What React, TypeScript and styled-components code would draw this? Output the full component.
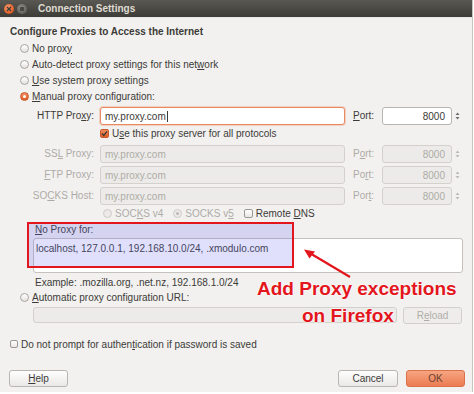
import { Fragment } from 'react';
import styled, { createGlobalStyle, css } from 'styled-components';

const Global = createGlobalStyle`
  body {
    margin: 0;
    background: #ffffff;
  }
`;

const Window = styled.div`
  position: relative;
  width: 472px;
  height: 392px;
  background: #f2f1f0;
  border-right: 1px solid #c8c5c0;
  font-family: 'Liberation Sans', Arial, sans-serif;
  font-size: 10px;
  color: #3c3b37;
  overflow: hidden;
`;

const TitleBar = styled.div`
  display: flex;
  align-items: center;
  height: 17px;
  padding-left: 4px;
  background: linear-gradient(#5a5852, #3d3c38);
  border-bottom: 1px solid #e9e7e3;
`;

const WinButton = styled.span<{ $kind: 'close' | 'min' }>`
  display: flex;
  align-items: center;
  justify-content: center;
  width: 10px;
  height: 10px;
  border-radius: 50%;
  margin-right: 3px;
  ${(p) =>
    p.$kind === 'close'
      ? css`
          background: radial-gradient(circle at 40% 35%, #f49a6e, #e25a22 70%);
        `
      : css`
          background: radial-gradient(circle at 40% 35%, #8c8a84, #67655f 70%);
        `}
`;

const Title = styled.span`
  margin-left: 8px;
  font-weight: bold;
  color: #dfdbd2;
`;

const Body = styled.div`
  padding: 6px 8px 0 10px;
`;

const Heading = styled.div`
  font-weight: bold;
  line-height: 16px;
`;

const RadioList = styled.div`
  display: flex;
  flex-direction: column;
  padding-left: 10px;
`;

const Option = styled.div<{ $h?: number; $disabled?: boolean }>`
  display: flex;
  align-items: center;
  gap: 3px;
  height: ${(p) => p.$h ?? 16}px;
  white-space: nowrap;
  color: ${(p) => (p.$disabled ? '#aeaba6' : '#3c3b37')};
`;

const Radio = styled.span<{ $checked?: boolean; $disabled?: boolean }>`
  position: relative;
  flex: none;
  width: 9px;
  height: 9px;
  box-sizing: border-box;
  border-radius: 50%;
  border: 1px solid ${(p) => (p.$checked && !p.$disabled ? '#c9592a' : p.$disabled ? '#cfccc7' : '#a9a6a1')};
  background: ${(p) =>
    p.$checked && !p.$disabled
      ? 'linear-gradient(#f28d5f, #e05d26)'
      : p.$disabled
      ? '#eceae8'
      : 'linear-gradient(#ffffff, #e4e2df)'};
  &::after {
    content: '';
    display: ${(p) => (p.$checked ? 'block' : 'none')};
    position: absolute;
    left: 2px;
    top: 2px;
    width: 3px;
    height: 3px;
    border-radius: 50%;
    background: ${(p) => (p.$disabled ? '#bcb9b4' : '#ffffff')};
  }
`;

const Box = styled.span<{ $checked?: boolean; $size?: number }>`
  display: flex;
  align-items: center;
  justify-content: center;
  flex: none;
  width: ${(p) => p.$size ?? 9}px;
  height: ${(p) => p.$size ?? 9}px;
  box-sizing: border-box;
  border-radius: 2px;
  border: 1px solid ${(p) => (p.$checked ? '#c9592a' : '#9c9994')};
  background: ${(p) => (p.$checked ? 'linear-gradient(#f28d5f, #e05d26)' : 'linear-gradient(#ffffff, #e9e7e4)')};
`;

const U = styled.span`
  text-decoration: underline;
  text-underline-offset: 1px;
`;

const ProxyGrid = styled.div`
  display: grid;
  grid-template-columns: 90px 245px 37px 70px 12px;
  grid-template-rows: 18px 17px 21px 21px 21px 17px;
  margin-top: 3px;
`;

const FieldLabel = styled.div<{ $disabled?: boolean; $left?: boolean }>`
  align-self: end;
  height: 18px;
  line-height: 18px;
  white-space: nowrap;
  text-align: ${(p) => (p.$left ? 'left' : 'right')};
  padding: ${(p) => (p.$left ? '0 0 0 8px' : '0 6px 0 0')};
  color: ${(p) => (p.$disabled ? '#aeaba6' : '#3c3b37')};
`;

const Field = styled.div<{ $focus?: boolean; $disabled?: boolean; $right?: boolean }>`
  align-self: end;
  display: flex;
  align-items: center;
  justify-content: ${(p) => (p.$right ? 'flex-end' : 'flex-start')};
  height: 18px;
  box-sizing: border-box;
  padding: 0 6px 0 4px;
  border-radius: 3px;
  white-space: nowrap;
  border: 1px solid ${(p) => (p.$focus ? '#ea8a60' : p.$disabled ? '#d4d1cc' : '#b8b4af')};
  background: ${(p) => (p.$disabled ? '#ecebe9' : '#ffffff')};
  color: ${(p) => (p.$disabled ? '#aeaba6' : '#3c3b37')};
  box-shadow: ${(p) => (p.$focus ? '0 0 0 1px rgba(240, 150, 110, 0.35)' : 'none')};
`;

const Caret = styled.span`
  width: 1px;
  height: 11px;
  margin-left: 1px;
  background: #3c3b37;
`;

const Spin = styled.div`
  align-self: end;
  display: flex;
  align-items: center;
  height: 18px;
  padding-left: 3px;
`;

const Span2 = styled.div`
  grid-column: 2 / span 4;
  display: flex;
  align-items: center;
  white-space: nowrap;
`;

const SocksGroup = styled(Span2)`
  gap: 10px;
  padding-left: 3px;
`;

const NoProxy = styled.div`
  margin-left: 23px;
  width: 430px;
`;

const NoProxyLabel = styled.div`
  line-height: 16px;
  padding-left: 2px;
`;

const TextArea = styled.div`
  height: 35px;
  box-sizing: border-box;
  padding: 3px 2px 0 2px;
  line-height: 14px;
  border: 1px solid #c5c1bc;
  border-radius: 3px;
  background: #ffffff;
`;

const Hint = styled.div`
  margin: 3px 0 0 25px;
  line-height: 14px;
`;

const UrlRow = styled.div`
  display: flex;
  gap: 6px;
  margin: 3px 0 0 23px;
`;

const UrlField = styled.div`
  width: 364px;
  height: 16px;
  box-sizing: border-box;
  border: 1px solid #d4d1cc;
  border-radius: 3px;
  background: #ecebe9;
`;

const Button = styled.div<{ $primary?: boolean; $disabled?: boolean; $w?: number }>`
  display: flex;
  align-items: center;
  justify-content: center;
  width: ${(p) => p.$w ?? 59}px;
  height: 17px;
  box-sizing: border-box;
  border-radius: 3px;
  border: 1px solid ${(p) => (p.$primary ? '#d9714a' : p.$disabled ? '#d3d0cb' : '#b9b5b0')};
  background: ${(p) =>
    p.$primary
      ? 'linear-gradient(#f6a582, #ec7c52)'
      : p.$disabled
      ? '#eeedeb'
      : 'linear-gradient(#fefefe, #e9e8e6)'};
  color: ${(p) => (p.$primary ? '#6a4232' : p.$disabled ? '#b0ada8' : '#3c3b37')};
`;

const Footer = styled.div`
  display: flex;
  justify-content: space-between;
  margin: 19px -1px 0 -1px;
`;

const ButtonGroup = styled.div`
  display: flex;
  gap: 8px;
`;

const Highlight = styled.div`
  position: absolute;
  left: 27px;
  top: 222px;
  width: 267px;
  height: 46px;
  box-sizing: border-box;
  border: 2px solid #e3161d;
  background: rgba(100, 100, 240, 0.2);
`;

const Callout = styled.div`
  position: absolute;
  left: 257px;
  top: 275px;
  font-family: 'Liberation Sans', Arial, sans-serif;
  font-weight: bold;
  font-size: 19px;
  line-height: 27px;
  color: #e3161d;
  white-space: nowrap;
  text-shadow: 0 0 2px #ffffff, 0 0 2px #ffffff;
`;

const CalloutLine = styled.div<{ $indent?: number }>`
  padding-left: ${(p) => p.$indent ?? 0}px;
`;

const Arrow = styled.svg`
  position: absolute;
  left: 300px;
  top: 245px;
`;

const SpinIcon = ({ disabled }: { disabled?: boolean }) => (
  <svg width="5" height="10" viewBox="0 0 5 10">
    <path d="M0.5 4 L2.5 1.5 L4.5 4 Z M0.5 6 L2.5 8.5 L4.5 6 Z" fill={disabled ? '#bdbab5' : '#6f6c67'} />
  </svg>
);

const Check = () => (
  <svg width="7" height="7" viewBox="0 0 7 7">
    <path d="M1 3.6 L2.8 5.4 L6 1.4" fill="none" stroke="#3c3b37" strokeWidth="1.4" />
  </svg>
);

const proxies = [
  { id: 'ssl', label: <>SS<U>L</U> Proxy:</>, port: <>P<U>o</U>rt:</> },
  { id: 'ftp', label: <><U>F</U>TP Proxy:</>, port: <>Po<U>r</U>t:</> },
  { id: 'socks', label: <>SO<U>C</U>KS Host:</>, port: <>Por<U>t</U>:</> },
];

export default function App() {
  return (
    <Window>
      <Global />
      <TitleBar>
        <WinButton $kind="close">
          <svg width="6" height="6" viewBox="0 0 6 6">
            <path d="M1 1 L5 5 M5 1 L1 5" stroke="#3c3b37" strokeWidth="1.3" />
          </svg>
        </WinButton>
        <WinButton $kind="min">
          <svg width="6" height="6" viewBox="0 0 6 6">
            <rect x="1" y="1" width="4" height="4" rx="0.5" fill="#4a4843" />
          </svg>
        </WinButton>
        <Title>Connection Settings</Title>
      </TitleBar>
      <Body>
        <Heading>Configure Proxies to Access the Internet</Heading>
        <RadioList>
          <Option>
            <Radio />
            <span>
              No prox<U>y</U>
            </span>
          </Option>
          <Option>
            <Radio />
            <span>
              Auto-detect proxy settings for this net<U>w</U>ork
            </span>
          </Option>
          <Option>
            <Radio />
            <span>
              <U>U</U>se system proxy settings
            </span>
          </Option>
          <Option>
            <Radio $checked />
            <span>
              <U>M</U>anual proxy configuration:
            </span>
          </Option>
        </RadioList>

        <ProxyGrid>
          <FieldLabel>
            HTTP Pro<U>x</U>y:
          </FieldLabel>
          <Field $focus>
            my.proxy.com
            <Caret />
          </Field>
          <FieldLabel $left>
            <U>P</U>ort:
          </FieldLabel>
          <Field $right>8000</Field>
          <Spin>
            <SpinIcon />
          </Spin>

          <Span2>
            <Option $h={17}>
              <Box $checked>
                <Check />
              </Box>
              <span>
                U<U>s</U>e this proxy server for all protocols
              </span>
            </Option>
          </Span2>

          {proxies.map((p) => (
            <Fragment key={p.id}>
              <FieldLabel $disabled>{p.label}</FieldLabel>
              <Field $disabled>my.proxy.com</Field>
              <FieldLabel $left $disabled>
                {p.port}
              </FieldLabel>
              <Field $disabled $right>
                8000
              </Field>
              <Spin>
                <SpinIcon disabled />
              </Spin>
            </Fragment>
          ))}

          <SocksGroup>
            <Option $h={17} $disabled>
              <Radio $disabled />
              <span>
                SOC<U>K</U>S v4
              </span>
            </Option>
            <Option $h={17} $disabled>
              <Radio $disabled $checked />
              <span>
                SOCKS v<U>5</U>
              </span>
            </Option>
            <Option $h={17}>
              <Box />
              <span>
                Remote <U>D</U>NS
              </span>
            </Option>
          </SocksGroup>
        </ProxyGrid>

        <NoProxy>
          <NoProxyLabel>
            <U>N</U>o Proxy for:
          </NoProxyLabel>
          <TextArea>localhost, 127.0.0.1, 192.168.10.0/24, .xmodulo.com</TextArea>
        </NoProxy>
        <Hint>Example: .mozilla.org, .net.nz, 192.168.1.0/24</Hint>
        <RadioList>
          <Option $h={14}>
            <Radio />
            <span>
              <U>A</U>utomatic proxy configuration URL:
            </span>
          </Option>
        </RadioList>
        <UrlRow>
          <UrlField />
          <Button $disabled $w={59}>
            R<U>e</U>load
          </Button>
        </UrlRow>

        <Option $h={14} style={{ marginTop: 13 }}>
          <Box $size={8} />
          <span>
            Do not prompt for authen<U>t</U>ication if password is saved
          </span>
        </Option>

        <Footer>
          <Button>
            <U>H</U>elp
          </Button>
          <ButtonGroup>
            <Button $w={60}>Cancel</Button>
            <Button $primary>OK</Button>
          </ButtonGroup>
        </Footer>
      </Body>

      <Highlight />
      <Arrow width="60" height="40" viewBox="0 0 60 40">
        <path d="M50 32 L8 7" stroke="#e3161d" strokeWidth="2.2" fill="none" />
        <path d="M4 4.5 L15 6.5 L9.5 13.5 Z" fill="#e3161d" />
      </Arrow>
      <Callout>
        <CalloutLine>Add Proxy exceptions</CalloutLine>
        <CalloutLine $indent={45}>on Firefox</CalloutLine>
      </Callout>
    </Window>
  );
}
